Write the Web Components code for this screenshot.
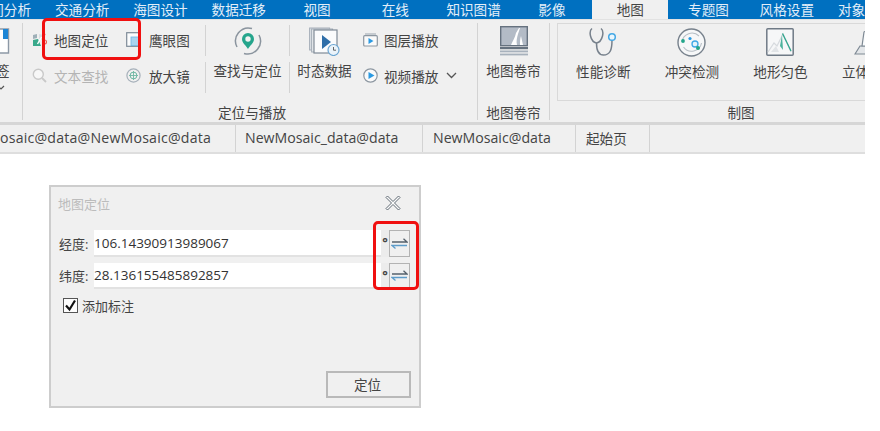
<!DOCTYPE html>
<html lang="zh"><head><meta charset="utf-8"><title>地图定位</title>
<style>
html,body{margin:0;padding:0;background:#fff;}
body{font-family:"Open Sans","Noto Sans CJK SC",sans-serif;font-size:13.6px;color:#444;width:880px;height:431px;overflow:hidden;position:relative;}
svg{display:block;}
</style></head><body>
<app-shell>
  <gis-ribbon>
    <ribbon-tab style="--w:78.3px;margin-left:-35.3px">空间分析</ribbon-tab><ribbon-tab>交通分析</ribbon-tab><ribbon-tab>海图设计</ribbon-tab><ribbon-tab>数据迁移</ribbon-tab><ribbon-tab>视图</ribbon-tab><ribbon-tab>在线</ribbon-tab><ribbon-tab>知识图谱</ribbon-tab><ribbon-tab>影像</ribbon-tab><ribbon-tab active>地图</ribbon-tab><ribbon-tab>专题图</ribbon-tab><ribbon-tab>风格设置</ribbon-tab><ribbon-tab>对象操作</ribbon-tab>

    <ribbon-group slot="groups" style="width:23px" nolabel>
      <large-btn style="width:40px;margin-left:-24px" label="书签">
        <svg slot="icon" width="40" height="32" viewBox="0 0 40 32"><path d="M20 4h12.500v24H20z" fill="#fff" stroke="#8d99a6" stroke-width="1.400"/><path d="M27 4h5v10h-5z" fill="#1d86d6"/></svg>
      </large-btn>
      <svg style="position:absolute;left:-2px;top:62px" width="8" height="8" viewBox="0 0 8 8"><path d="M0 1l3 3 3-3" fill="none" stroke="#555" stroke-width="1.200"/></svg>
    </ribbon-group>

    <ribbon-group slot="groups" style="width:455px;--lx:4px" label="定位与播放">
      <small-grid>
        <small-btn style="width:94px;--gap:7px" label="地图定位">
          <svg slot="icon" width="15" height="16" viewBox="0 0 15 16"><path d="M1 3l4-1v4L1 7z" fill="#9fb0b8"/><path d="M1 8l5-1 3 7H1z" fill="#3aa98b"/><path d="M7 2l5 1-1 5-4-1z" fill="#d7dee2"/><circle cx="12.500" cy="2.500" r="1" fill="#e9635a"/><circle cx="12.500" cy="10" r="2" fill="none" stroke="#e9635a" stroke-width="1.200"/><path d="M5.500 12l4-7" stroke="#fff" stroke-width="1.400"/></svg>
        </small-btn>
        <small-btn style="width:56px" label="鹰眼图">
          <svg slot="icon" width="15" height="15" viewBox="0 0 15 15"><rect x=".7" y=".7" width="13.600" height="13.600" fill="#fbfcfd" stroke="#7e8b98" stroke-width="1.200"/><rect x="5" y="5" width="9" height="8.600" fill="#a9d3ef" stroke="#6fb3e0" stroke-width=".8"/></svg>
        </small-btn>
        <small-btn style="width:94px;--gap:7px" label="文本查找" disabled>
          <svg slot="icon" width="15" height="15" viewBox="0 0 15 15"><circle cx="6.300" cy="6.300" r="5" fill="#f7f7f7" stroke="#c9c9c9" stroke-width="1.400"/><path d="M10 10l4 4" stroke="#c9c9c9" stroke-width="1.800"/></svg>
        </small-btn>
        <small-btn style="width:56px" label="放大镜">
          <svg slot="icon" width="15" height="15" viewBox="0 0 15 15"><circle cx="7.500" cy="7.500" r="6.600" fill="none" stroke="#a6b0ba" stroke-width="1.200"/><circle cx="7.500" cy="7.500" r="3.400" fill="none" stroke="#6fb7a4" stroke-width="1"/><path d="M7.500 3v9M3 7.500h9" stroke="#6fb7a4" stroke-width=".9"/></svg>
        </small-btn>
      </small-grid>
      <split-sep></split-sep>
      <large-btn style="width:83px" label="查找与定位">
        <svg slot="icon" width="30" height="30" viewBox="0 0 30 30"><path d="M4 21A13 13 0 0 1 19 2.500" fill="none" stroke="#8a949e" stroke-width="1.500"/><path d="M26 9A13 13 0 0 1 11 27.500" fill="none" stroke="#8a949e" stroke-width="1.500"/><path d="M15 7a6 6 0 0 1 6 6c0 4-4 6.500-6 10-2-3.500-6-6-6-10a6 6 0 0 1 6-6z" fill="#25a58c"/><circle cx="15" cy="13" r="2.700" fill="#f2f2f2"/></svg>
      </large-btn>
      <split-sep></split-sep>
      <large-btn style="width:69px" label="时态数据">
        <svg slot="icon" width="31" height="29" viewBox="0 0 31 29"><rect x=".6" y="1" width="20" height="22" fill="#dde1e6" stroke="#a5aeb8"/><rect x="2.600" y="2" width="21" height="23" fill="#e7eaee" stroke="#a5aeb8"/><rect x="5" y="3" width="23" height="23" fill="#fafbfc" stroke="#7f8a96" stroke-width="1.200"/><path d="M13 8l9 7-9 7z" fill="#2f6ea8"/><circle cx="24.500" cy="23" r="5.500" fill="#eaf3fa" stroke="#6aa5d2" stroke-width="1.200"/><path d="M24.500 20v3.200h2.500" fill="none" stroke="#555" stroke-width=".9"/></svg>
      </large-btn>
      <small-col>
        <small-btn label="图层播放" style="--gap:6px">
          <svg slot="icon" width="15" height="14" viewBox="0 0 15 14"><path d="M2 1h11" stroke="#aab2ba" stroke-width="1.200"/><rect x=".7" y="2.700" width="13.600" height="10.300" rx="1" fill="#fafafa" stroke="#8d97a1" stroke-width="1.200"/><path d="M5.500 5l5 3-5 3z" fill="#2b9ae2"/></svg>
        </small-btn>
        <small-btn label="视频播放" style="--gap:6px">
          <svg slot="icon" width="15" height="15" viewBox="0 0 15 15"><circle cx="7.500" cy="7.500" r="6.700" fill="#fafafa" stroke="#8d97a1" stroke-width="1.200"/><path d="M5.500 4l6 3.500-6 3.500z" fill="#2b9ae2"/></svg>
          <svg slot="after" width="11" height="7" viewBox="0 0 11 7"><path d="M1 1l4.500 4.500L10 1" fill="none" stroke="#555" stroke-width="1.300"/></svg>
        </small-btn>
      </small-col>
    </ribbon-group>

    <ribbon-group slot="groups" style="width:72px" label="地图卷帘">
      <large-btn style="width:71px" label="地图卷帘">
        <svg slot="icon" width="28" height="30" viewBox="0 0 28 30"><rect x=".7" y=".7" width="26.600" height="19" fill="#b3bbc6" stroke="#66727f" stroke-width="1.400"/><path d="M11 19c2-5 4-7 5-12l3-5h1l-2 6c-1 4-2 7-1 11zM21 10l2 9h-3c0-3 0-6 1-9z" fill="#fff"/><rect y="21" width="28" height="2.200" fill="#66727f"/><rect y="24.500" width="28" height="1.800" fill="#a7b1bc"/><rect y="27.600" width="28" height="1.800" fill="#a7b1bc"/></svg>
      </large-btn>
    </ribbon-group>

    <ribbon-group slot="groups" style="width:368px;margin-left:7px;border:0" label="制图" boxed>
      <large-btn style="width:88.600px" label="性能诊断">
        <svg slot="icon" width="28" height="30" viewBox="0 0 28 30"><path d="M3 1.500C1 3 .800 6 1.500 9c1 4 3 6.500 6 7 3-.500 5-3 6-7 .700-3 .500-6-1.500-7.500" fill="none" stroke="#77818c" stroke-width="1.500"/><path d="M7.500 16c0 6 1 12 7 12 6.500 0 8.500-5 8.500-15" fill="none" stroke="#77818c" stroke-width="1.500"/><circle cx="23" cy="10" r="3.300" fill="#eaf6fd" stroke="#45a8e5" stroke-width="1.500"/></svg>
      </large-btn>
      <large-btn style="width:88.600px" label="冲突检测">
        <svg slot="icon" width="29" height="29" viewBox="0 0 29 29"><circle cx="14.500" cy="14.500" r="13.500" fill="#f6f7f8" stroke="#77818c" stroke-width="1.400"/><path d="M5 14a10 10 0 0 1 17-6M24.500 15a10 10 0 0 1-18 4" fill="none" stroke="#b7bec5" stroke-width="1.100"/><circle cx="6" cy="13" r="1.900" fill="#22a58a"/><circle cx="13" cy="10.500" r="1.600" fill="#2b9ae2"/><circle cx="18" cy="16" r="3" fill="#e3f3fc" stroke="#3ea7e6" stroke-width="1.300"/><circle cx="21" cy="20" r="2" fill="#22a58a"/></svg>
      </large-btn>
      <large-btn style="width:88.600px" label="地形匀色">
        <svg slot="icon" width="28" height="28" viewBox="0 0 28 28"><rect x=".8" y=".8" width="26.400" height="26.400" rx="1" fill="#f6f7f8" stroke="#6f7a86" stroke-width="1.500"/><path d="M2 24l6-9 3 3 6-12 8 18" fill="none" stroke="#d6dade" stroke-width="1.200"/><path d="M5 24l5-6 3 6z" fill="#e1e4e7"/><path d="M16 7l-2 11 3 4z" fill="#4db39d"/><path d="M16.500 5.500L25 23" stroke="#2fa58d" stroke-width="1.300" fill="none"/></svg>
      </large-btn>
      <large-btn style="width:88.600px" label="立体显示">
        <svg slot="icon" width="30" height="28" viewBox="0 0 30 28"><path d="M1 26l5-8h18l5 8z" fill="#e3e6e9" stroke="#7e8994" stroke-width="1.200"/><path d="M8 18l2-14 5-3 5 3 1 14z" fill="#f9fbfc" stroke="#7e8994" stroke-width="1.200"/><rect x="11" y="6" width="7" height="9" fill="#a9d3ef"/></svg>
      </large-btn>
    </ribbon-group>

    <doc-tab slot="docs" style="width:236px;justify-content:flex-end;padding-right:24px;font-size:14.150px;letter-spacing:.2px">osaic@data@NewMosaic@data</doc-tab>
    <doc-tab slot="docs" style="width:187px;padding-left:9px;font-size:14.150px">NewMosaic_data@data</doc-tab>
    <doc-tab slot="docs" style="width:153px;font-size:14.150px">NewMosaic@data</doc-tab>
    <doc-tab slot="docs" style="width:74px">起始页</doc-tab>
  </gis-ribbon>

  <locate-dialog heading="地图定位">
    <coord-row label="经度:" value="106.14390913989067"></coord-row>
    <coord-row label="纬度:" value="28.136155485892857"></coord-row>
    <check-field label="添加标注"></check-field>
  </locate-dialog>
</app-shell>
<red-mark style="left:42px;top:18px;width:99px;height:42px"></red-mark>
<red-mark style="left:373px;top:221px;width:46px;height:69px"></red-mark>

<script>
function def(name,css,html,extra){
  customElements.define(name,class extends HTMLElement{
    constructor(){super();const r=this.attachShadow({mode:'open'});r.innerHTML='<style>'+css+'</style>'+html;}
    connectedCallback(){
      const r=this.shadowRoot;
      r.querySelectorAll('[data-attr]').forEach(n=>{n.textContent=this.getAttribute(n.dataset.attr)||'';});
      if(extra)extra.call(this,r);
    }
  });
}
def('app-shell',':host{display:block}','<slot></slot>');
def('gis-ribbon',`
 :host{display:block;width:865px;overflow:hidden}
 .tabs{display:flex;height:19px;background:#0070c0;}
 .body{display:flex;height:99px;padding-top:4px;background:#f0f0f0;border-top:0;position:relative;box-shadow:inset 0 1px 0 #e2e2e2}
 .line{height:3px;background:#d6d6d6}
 .docs{display:flex;height:27px;background:#f0f0f0;border-bottom:2px solid #dedede}
`,`<div class="tabs"><slot></slot></div><div class="body"><slot name="groups"></slot></div><div class="line"></div><div class="docs"><slot name="docs"></slot></div>`);
def('ribbon-tab',`
 :host{display:flex;flex:none;width:78.3px;height:19px;align-items:center;justify-content:center;color:#e3eef8;white-space:nowrap;line-height:19px}
 :host([active]){background:#f0f0f0;color:#444;width:76px;margin:0 1.150px;}
`,'<slot></slot>');
def('ribbon-group',`
 :host{display:grid;grid-template-rows:78px 19px;flex:none;box-sizing:border-box;border-right:1px solid #d3d3d3;margin-bottom:2px;position:relative;height:97px}
 .c{display:flex;min-height:0;height:78px}
 .l{text-align:center;line-height:24px;height:19px;color:#444;white-space:nowrap;padding-left:var(--lx,0)}
 :host([boxed]) .c{box-sizing:border-box;border:1px solid #d9d9d9;padding-left:1px;border-right:0}
`,'<div class="c"><slot></slot></div><div class="l" data-attr="label"></div>');
def('small-grid',':host{display:grid;grid-template-columns:94px 56px;grid-auto-rows:36px;padding-left:9px;width:173px;flex:none}','<slot></slot>');
def('small-col',':host{display:grid;grid-auto-rows:36px;padding-left:4px;flex:none;width:114px}','<slot></slot>');
def('small-btn',`
 :host{display:flex;align-items:center;white-space:nowrap;height:36px;box-sizing:border-box;padding-bottom:3px;color:#444}
 :host([disabled]){color:#b4b4b4}
 .i{width:15px;margin-right:var(--gap,8px);flex:none;display:flex;justify-content:center}
 .a{margin-left:8px;display:flex}
`,'<span class="i"><slot name="icon"></slot></span><span data-attr="label"></span><span class="a"><slot name="after"></slot></span>');
def('large-btn',`
 :host{display:flex;flex-direction:column;align-items:center;flex:none;white-space:nowrap;color:#444}
 .i{height:36px;display:flex;align-items:center;justify-content:center}
 .t{height:20px;line-height:20px;margin-top:2px}
`,'<span class="i"><slot name="icon"></slot></span><span class="t" data-attr="label"></span>');
def('split-sep',`
 :host{display:flex;flex-direction:column;gap:6px;width:1px;flex:none;padding-top:2px}
 i{display:block;width:1px;height:31px;background:#d3d3d3}
`,'<i></i><i></i>');
def('doc-tab',`
 :host{display:flex;flex:none;box-sizing:border-box;align-items:center;padding-left:10px;padding-bottom:2px;height:27px;border-right:1px solid #d3d3d3;color:#444;white-space:nowrap}
`,'<slot></slot>');
def('locate-dialog',`
 :host{display:block;box-sizing:border-box;width:372px;height:223px;margin:31px 0 0 49px;background:#f0f0f0;border:2px solid #cdcdcd;position:relative}
 .head{display:flex;justify-content:space-between;align-items:center;height:34px;padding:0 18px 2px 7px;box-sizing:border-box}
 .t{color:#bcbcbc;font-size:13px}
 .rows{display:flex;flex-direction:column;gap:6px;padding:9px 0 0 8px}
 .foot{display:flex;justify-content:flex-end;padding-right:8px;position:absolute;right:0;bottom:8px}
 button{width:85px;height:27px;box-sizing:border-box;background:#f0f0f0;border:2px solid #b9b9b9;font:inherit;color:#444;padding:0 2px 2px 0}
`,`<div class="head"><span class="t" data-attr="heading"></span>
 <svg width="16" height="16" viewBox="0 0 16 16"><path d="M2.500 1L8 6.500 13.500 1 15 2.500 9.500 8 15 13.500 13.500 15 8 9.500 2.500 15 1 13.500 6.500 8 1 2.500z" fill="#fbfbfb" stroke="#5f6973" stroke-width="1"/></svg></div>
 <div class="rows"><slot></slot></div><div class="foot"><button type="button">定位</button></div>`);
def('coord-row',`
 :host{display:flex;align-items:stretch;height:26.500px;white-space:nowrap}
 .lb{width:35px;flex:none;display:flex;align-items:center;font-size:13px}
 .in{width:287px;flex:none;box-sizing:border-box;background:#fff;border-bottom:2px solid #e2e2e2;display:flex;align-items:center;padding-top:1px;color:#333;font-size:13.500px}
 .d{width:8px;flex:none;font-size:13px;font-weight:700;line-height:24px;background:#ececec;text-align:center;color:#444}
 .sw{width:21px;flex:none;box-sizing:border-box;border:1px solid #b3b3b3;background:#f0f0f0;display:flex;align-items:center;justify-content:center}
`,`<span class="lb" data-attr="label"></span><span class="in" data-attr="value"></span><span class="d">°</span>
 <span class="sw"><svg width="17" height="11" viewBox="0 0 17 11"><path d="M1 4h15L12.500 .8" fill="none" stroke="#56616c" stroke-width="1.300"/><path d="M16 7.500H1L4.500 10.500" fill="none" stroke="#5d9cca" stroke-width="1.300"/></svg></span>`);
def('check-field',`
 :host{display:flex;align-items:center;gap:4px;padding:1px 0 0 4px;color:#444;font-size:13px}
 .b{width:15px;height:15px;box-sizing:border-box;border:1px solid #555;background:#fdfdfd;display:flex}
`,`<span class="b"><svg width="13" height="13" viewBox="0 0 13 13"><path d="M2 6.500l3.500 4L11 1.500" fill="none" stroke="#111" stroke-width="2.200"/></svg></span><span data-attr="label"></span>`);
def('red-mark',':host{position:absolute;box-sizing:border-box;border:3px solid #f01010;border-radius:5px;display:block;pointer-events:none}','');
</script>
</body></html>
